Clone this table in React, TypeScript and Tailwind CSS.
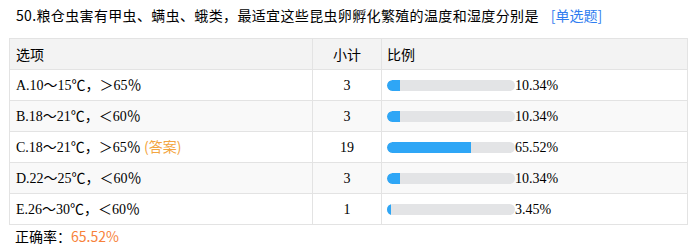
import React from "react";

const rows = [
  { label: "A.10～15℃，＞65％", count: 3, pct: 10.34, answer: false },
  { label: "B.18～21℃，＜60％", count: 3, pct: 10.34, answer: false },
  { label: "C.18～21℃，＞65％", count: 19, pct: 65.52, answer: true },
  { label: "D.22～25℃，＜60％", count: 3, pct: 10.34, answer: false },
  { label: "E.26～30℃，＜60％", count: 1, pct: 3.45, answer: false },
];

const sans = { fontFamily: '"Noto Sans CJK SC", "Noto Sans", sans-serif' };
const serif = { fontFamily: '"Liberation Serif", "Noto Sans CJK SC", serif' };

export default function App() {
  return (
    <div className="w-[693px] h-[248px] bg-white px-[9px] text-black" style={sans}>
      <div className="h-[38px] pl-[7px] pt-[5px] text-[14px] leading-[20px] tracking-[0.35px] whitespace-nowrap">
        50.粮仓虫害有甲虫、螨虫、蛾类，最适宜这些昆虫卵孵化繁殖的温度和湿度分别是
        <span className="ml-[12px] text-[#2f7df0] tracking-normal">[单选题]</span>
      </div>
      <table className="w-[678px] border-collapse table-fixed">
        <colgroup>
          <col className="w-[303px]" />
          <col className="w-[69px]" />
          <col className="w-[306px]" />
        </colgroup>
        <thead>
          <tr className="h-[31px] bg-[#f3f3f3] text-[14px]">
            <th className="border border-[#e3e3e3] pl-[6px] text-left font-normal">选项</th>
            <th className="border border-[#e3e3e3] text-center font-normal">小计</th>
            <th className="border border-[#e3e3e3] pl-[5px] text-left font-normal">比例</th>
          </tr>
        </thead>
        <tbody>
          {rows.map((r, i) => (
            <tr key={i} className={`h-[31px] text-[14px] ${i % 2 === 1 ? "bg-[#f9f9f9]" : "bg-white"}`}>
              <td className="border border-[#e3e3e3] pl-[6px] whitespace-nowrap" style={serif}>
                {r.label}
                {r.answer && (
                  <span className="text-[#f3a540]" style={sans}> (答案)</span>
                )}
              </td>
              <td className="border border-[#e3e3e3] text-center" style={serif}>
                {r.count}
              </td>
              <td className="border border-[#e3e3e3] pl-[5px]">
                <div className="flex items-center">
                  <div className="h-[11px] w-[128px] rounded-[6px] bg-[#e3e4e6] overflow-hidden">
                    <div
                      className="h-full bg-[#2ea6f6] rounded-l-[6px]"
                      style={{ width: `${Math.max(r.pct, 3.5)}%` }}
                    />
                  </div>
                  <span className="text-[14px]" style={serif}>
                    {r.pct.toFixed(2)}%
                  </span>
                </div>
              </td>
            </tr>
          ))}
        </tbody>
      </table>
      <div className="pl-[6px] pt-[1px] text-[14px] leading-[20px]">
        正确率：<span className="text-[#f7823a]" style={sans}>65.52%</span>
      </div>
    </div>
  );
}
